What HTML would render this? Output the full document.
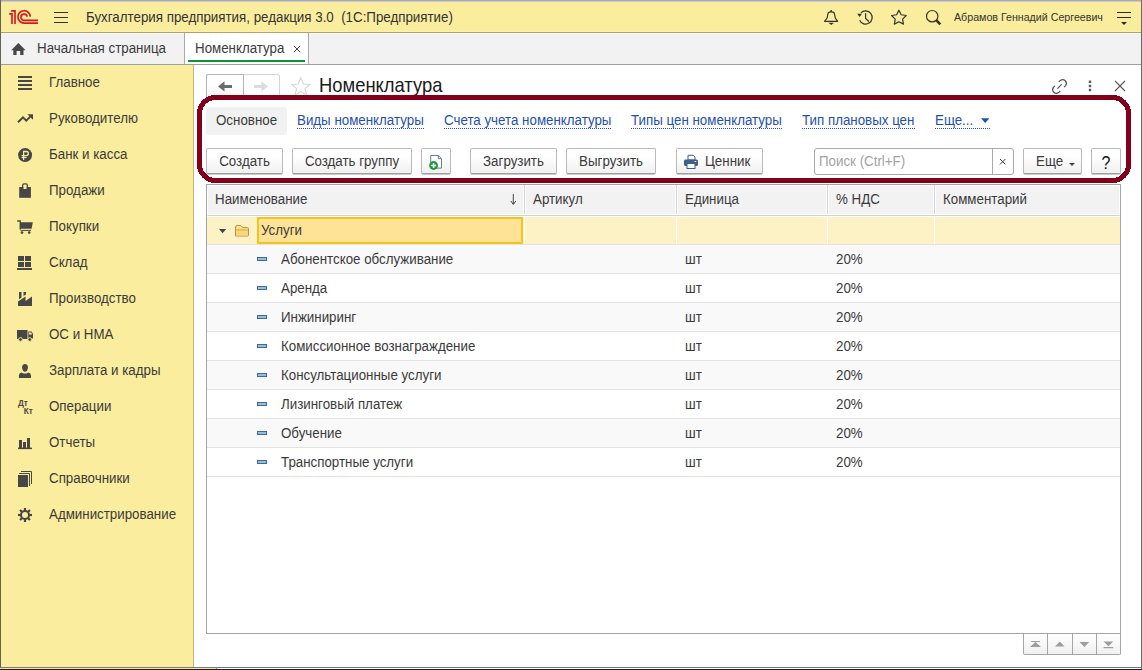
<!DOCTYPE html>
<html><head><meta charset="utf-8">
<style>
*{box-sizing:border-box}
html,body{margin:0;padding:0}
body{width:1142px;height:670px;overflow:hidden;position:relative;background:#fff;font-family:"Liberation Sans",sans-serif;font-size:13.33px;color:#3a3a3a}
.a{position:absolute}
.t{position:absolute;white-space:nowrap;line-height:15px;transform:scaleY(1.1);transform-origin:0 3px}
svg{position:absolute;overflow:visible}
/* header */
#hdr{left:0;top:0;width:1142px;height:33px;background:#fbed9e;border-top:1px solid #acacac;border-bottom:1px solid #aba273;box-shadow:inset 0 -1px 0 #fff2a8}
#tabs{left:0;top:33px;width:1142px;height:32px;background:#f2f2f2;border-bottom:1px solid #a0a0a0;box-shadow:inset 0 1px 0 #f8f8fa}
#side{left:0;top:65px;width:194px;height:602px;background:#fbed9e;border-right:1px solid #c6b578}
.btn{position:absolute;height:26px;top:148px;border:1px solid #b9b9b9;border-bottom-color:#a0a0a0;border-radius:2px;background:linear-gradient(#ffffff 30%,#f0f0f0);box-shadow:0 1px 0 #c9c9c9}
.lnk{color:#1f4fae}
.ul{position:absolute;top:128px;height:1px;border-top:1px dotted #1f4fae}
</style></head><body>

<!-- header -->
<div class="a" id="hdr"></div>
<div class="a" style="left:0;top:1px;width:1142px;height:1px;background:#c9cacf"></div>
<div class="a" id="tabs"></div>
<div class="a" id="side"></div>

<!-- outer borders -->
<div class="a" style="left:0;top:0;width:1px;height:670px;background:#65624d"></div>
<div class="a" style="left:1141px;top:0;width:1px;height:670px;background:#6a6a6a"></div>
<div class="a" style="left:0;top:667px;width:1142px;height:1px;background:#777"></div>
<div class="a" style="left:0;top:668px;width:216px;height:1px;background:#fbe998"></div>
<div class="a" style="left:216px;top:668px;width:1px;height:1px;background:#b0a060"></div>
<div class="a" style="left:0;top:669px;width:1142px;height:1px;background:#1d1d22"></div>

<!-- header content -->
<svg style="left:0;top:0" width="60" height="33" viewBox="0 0 60 33">
  <g fill="none" stroke="#d9161e" stroke-width="1.65">
    <path d="M9.2 13.9 H12 V24 M11.1 10.8 H15 V24"/>
    <path d="M30.3 16.6 A6.2 6.2 0 1 0 24.2 23.1 H38"/>
    <path d="M27.1 16.6 A3.1 3.1 0 1 0 24.2 20.3 H38"/>
  </g>
  <g stroke="#333" stroke-width="1.2">
    <path d="M54 12.5 H68 M54 17.5 H68 M54 22.5 H68"/>
  </g>
</svg>
<div class="t" style="left:86px;top:9px;color:#333">Бухгалтерия предприятия, редакция 3.0&nbsp; (1С:Предприятие)</div>

<div class="t" style="left:954px;top:9px;font-size:10.67px;color:#333">Абрамов Геннадий Сергеевич</div>

<!-- tabs -->
<div class="a" style="left:184px;top:33px;width:1px;height:31px;background:#a9a9a9"></div>
<div class="a" style="left:185px;top:33px;width:123px;height:31px;background:#fff"></div>
<div class="a" style="left:308px;top:33px;width:1px;height:31px;background:#a9a9a9"></div>
<div class="a" style="left:188px;top:60px;width:117px;height:2px;background:#0e9436"></div>
<svg style="left:0;top:0" width="1142" height="670" viewBox="0 0 1142 670">
 <path d="M18.4 43 L25.6 50.2 H23.5 V55 H20.2 V51 H16.6 V55 H13.3 V50.2 H11.2 Z" fill="#474747"/>
 <path d="M293.8 45.8 L300.2 52.2 M300.2 45.8 L293.8 52.2" stroke="#444" stroke-width="1"/>
</svg>
<div class="t" style="left:37px;top:40px">Начальная страница</div>
<div class="t" style="left:195px;top:40px">Номенклатура</div>


<!-- sidebar icons + header icons -->
<svg style="left:0;top:0" width="1142" height="670" viewBox="0 0 1142 670">
 <g fill="#474747">
  <rect x="18" y="76" width="14" height="2"/><rect x="18" y="80" width="14" height="2"/><rect x="18" y="84" width="14" height="2"/><rect x="18" y="88" width="14" height="2"/>
 </g>
 <g fill="none" stroke="#474747" stroke-width="2">
  <path d="M18 122.3 L23 117.3 L26.3 120.6 L31 115.9"/>
 </g>
 <path d="M27.4 114.2 H33 V119.8 Z" fill="#474747"/>
 <circle cx="25.1" cy="155.1" r="7" fill="#474747"/>
 <g fill="none" stroke="#fbed9e" stroke-width="1.3">
  <path d="M23.6 160 V151.5 H26.4 Q28.3 151.5 28.3 153.55 Q28.3 155.55 26.4 155.55 H21.6"/>
  <path d="M21.6 157.55 H26.6" stroke-width="1.1"/>
 </g>
 <rect x="19.2" y="187" width="11.7" height="10.8" fill="#474747"/>
 <rect x="23.3" y="187" width="3.4" height="2" fill="#fbed9e"/>
 <path d="M22.65 189 V185.2 Q22.65 183.8 24.1 183.8 H25.9 Q27.35 183.8 27.35 185.2 V189" fill="none" stroke="#474747" stroke-width="1.3"/>
 <path d="M17.2 221 H20.2 V229.5" fill="none" stroke="#474747" stroke-width="1.3"/>
 <path d="M20 222.3 H32.8 L31.6 228.7 H20 Z" fill="#474747"/>
 <path d="M20.5 230.4 H31" stroke="#474747" stroke-width="1"/>
 <circle cx="22" cy="232.6" r="1.35" fill="#474747"/><circle cx="29.2" cy="232.6" r="1.35" fill="#474747"/>
 <g fill="#474747">
  <rect x="18" y="256" width="6" height="5"/><rect x="25" y="256" width="6" height="5"/><rect x="18" y="262" width="6" height="5"/><rect x="25" y="262" width="6" height="5"/>
  <rect x="17" y="268" width="15" height="2"/>
  <path d="M18 306 V301.5 L25.5 296.5 V301 L32 296.5 V306 Z"/>
  <path d="M19 292 H21.5 V297.6 L19 299.2 Z"/><path d="M23.5 292 H26 V294.4 L23.5 296.1 Z"/>
  <rect x="17" y="330" width="10.5" height="9"/>
  <path d="M28.3 331.6 H31.6 L33 334 V338.4 H28.3 Z"/>
 </g>
 <path d="M29 332.4 H31.2 L32.2 334.4 H29 Z" fill="#fbed9e"/>
 <circle cx="20.5" cy="339.5" r="1.9" fill="#474747" stroke="#fbed9e" stroke-width="0.9"/>
 <circle cx="29.8" cy="339.5" r="1.9" fill="#474747" stroke="#fbed9e" stroke-width="0.9"/>
 <g fill="#474747">
  <path d="M25 363.9 C26.9 363.9 27.9 365.2 27.9 367.2 C27.9 369.6 26.6 371.7 25 371.7 C23.4 371.7 22.1 369.6 22.1 367.2 C22.1 365.2 23.1 363.9 25 363.9 Z"/>
  <path d="M18.9 378 V375.6 Q18.9 373.2 21.6 372.5 L23.4 373.4 H26.6 L28.4 372.5 Q31 373.2 31 375.6 V378 Z"/>
 </g>
 <text x="18" y="405.6" font-family="Liberation Sans" font-size="8.2" font-weight="bold" fill="#474747">Дт</text>
 <text x="23.8" y="414" font-family="Liberation Sans" font-size="8.2" font-weight="bold" fill="#474747">Кт</text>
 <g fill="#474747">
  <rect x="19" y="440" width="3" height="8"/><rect x="23" y="442" width="3" height="6"/><rect x="27" y="438" width="3" height="10"/>
  <rect x="18" y="447.6" width="14" height="1.5"/>
  <rect x="18" y="475" width="10" height="12"/>
 </g>
 <path d="M19 473.5 H29.5 V486 M21 471.5 H31.5 V484" fill="none" stroke="#474747" stroke-width="1"/>
 <g transform="translate(25 515)">
  <g fill="#474747">
   <rect x="-1.1" y="-7" width="2.2" height="14"/>
   <rect x="-1.1" y="-7" width="2.2" height="14" transform="rotate(45)"/>
   <rect x="-1.1" y="-7" width="2.2" height="14" transform="rotate(90)"/>
   <rect x="-1.1" y="-7" width="2.2" height="14" transform="rotate(135)"/>
  </g>
  <circle r="4" fill="none" stroke="#474747" stroke-width="2"/>
  <circle r="3" fill="#fbed9e"/>
 </g>

 <!-- header icons -->
 <g fill="none" stroke="#333" stroke-width="1.2">
  <path d="M824.6 21.4 H837.6 C837.6 20.6 835.8 19.6 835.2 17.6 C834.8 16 834.6 13.6 834 12.6 C833.6 12 833 11.8 831.2 11.8 C829.4 11.8 828.8 12 828.4 12.6 C827.8 13.6 827.6 16 827.2 17.6 C826.6 19.6 824.6 20.6 824.6 21.4 Z"/>
  <path d="M860.9 12.8 A6.6 6.6 0 1 1 859.6 20.3"/>
  <path d="M865.6 13.3 V18.4 L869 21.5"/>
  <path d="M898.90 10.20 L901.19 14.74 L906.22 15.52 L902.61 19.11 L903.43 24.13 L898.90 21.80 L894.37 24.13 L895.19 19.11 L891.58 15.52 L896.61 14.74 Z" stroke-linejoin="round"/>
  <circle cx="932.2" cy="16.2" r="5.7"/>
 </g>
 <path d="M828.5 22.8 H833.9 L831.2 24.9 Z" fill="#333"/><circle cx="831.2" cy="10.9" r="0.9" fill="#333"/>
 <path d="M857.2 13.8 H862 L859.6 16.9 Z" fill="#333"/>
 <path d="M936.2 20.2 L940.3 24.3" stroke="#333" stroke-width="2.6"/>
 <g stroke="#2b2b2b" stroke-width="1.1"><path d="M1117 12.5 H1131 M1117 17.5 H1131"/></g>
 <path d="M1121 22 H1127 L1124 25 Z" fill="#2b2b2b"/>
</svg>

<!-- form header -->
<div class="a" style="left:206px;top:74px;width:38px;height:26px;border:1px solid #b3b3b3;border-right:none;border-radius:2px 0 0 2px;background:linear-gradient(#fff 40%,#f3f3f3)"></div>
<div class="a" style="left:243px;top:74px;width:37px;height:26px;border:1px solid #d4d4d4;border-radius:0 2px 2px 0;background:#fff"></div>
<div class="a" style="left:243px;top:74px;width:1px;height:26px;background:#b3b3b3"></div>
<svg style="left:0;top:0" width="1142" height="670" viewBox="0 0 1142 670">
 <path d="M218 86.4 L224.5 81.2 V84.9 H232 V88 H224.5 V91.6 Z" fill="#6b6b6b"/>
 <path d="M268 86.4 L261.5 81.2 V84.9 H254 V88 H261.5 V91.6 Z" fill="#dcdcdc"/>
 <path d="M300.8 77.8 L303.4 84 L310 84.4 L305 88.6 L306.6 95 L300.8 91.5 L295 95 L296.6 88.6 L291.6 84.4 L298.2 84 Z" fill="none" stroke="#d5d5d5" stroke-width="1.1"/>
 <g fill="none" stroke="#555" stroke-width="1.1" transform="translate(1059.5 86.5) scale(1.13) translate(-1059.5 -86.5)">
  <path d="M1058.9 82.5 L1060.3 81.1 A3.3 3.3 0 0 1 1064.9 85.7 L1063.5 87.1"/>
  <path d="M1060.1 90.5 L1058.7 91.9 A3.3 3.3 0 0 1 1054.1 87.3 L1055.5 85.9"/>
  <path d="M1057.6 88.4 L1061.4 84.6"/>
 </g>
 <g fill="#555"><rect x="1088.8" y="80.6" width="2.4" height="2.4"/><rect x="1088.8" y="84.8" width="2.4" height="2.4"/><rect x="1088.8" y="88.8" width="2.4" height="2.4"/></g>
 <path d="M1115 81 L1125 91 M1125 81 L1115 91" stroke="#555" stroke-width="1.1"/>
</svg>
<div class="t" style="left:319px;top:74px;font-size:18.4px;line-height:21px;color:#1a1a1a">Номенклатура</div>

<!-- tabs row -->
<div class="a" style="left:206px;top:107px;width:81px;height:28px;background:#f1f1f1;border-radius:3px"></div>
<div class="t" style="left:216px;top:112px">Основное</div>
<div class="t lnk" style="left:297px;top:112px">Виды номенклатуры</div>
<div class="t lnk" style="left:444px;top:112px">Счета учета номенклатуры</div>
<div class="t lnk" style="left:631px;top:112px">Типы цен номенклатуры</div>
<div class="t lnk" style="left:802px;top:112px">Тип плановых цен</div>
<div class="t lnk" style="left:935px;top:112px">Еще...</div>
<div class="ul" style="left:297px;width:127px"></div>
<div class="ul" style="left:444px;width:167px"></div>
<div class="ul" style="left:631px;width:151px"></div>
<div class="ul" style="left:802px;width:113px"></div>
<div class="ul" style="left:935px;width:55px"></div>
<svg style="left:0;top:0" width="1142" height="670" viewBox="0 0 1142 670"><path d="M981 118.3 H989.4 L985.2 122.9 Z" fill="#1f4fae"/></svg>

<!-- buttons row -->
<div class="btn" style="left:206px;width:77px"></div>
<div class="t" style="left:206px;top:153px;width:77px;text-align:center">Создать</div>
<div class="btn" style="left:292px;width:120px"></div>
<div class="t" style="left:292px;top:153px;width:120px;text-align:center">Создать группу</div>
<div class="btn" style="left:421px;width:30px"></div>
<svg style="left:0;top:0" width="1142" height="670" viewBox="0 0 1142 670">
 <path d="M430.7 155.5 H438.3 L441.5 158.7 V168.1 H430.7 Z" fill="#fff" stroke="#667a95" stroke-width="1"/>
 <path d="M438.3 155.5 V158.7 H441.5" fill="none" stroke="#667a95" stroke-width="1"/>
 <circle cx="433.6" cy="165.5" r="4.4" fill="#1b9b35"/>
 <path d="M433.6 163 V168 M431.1 165.5 H436.1" stroke="#fff" stroke-width="1.5"/>
</svg>
<div class="btn" style="left:470px;width:87px"></div>
<div class="t" style="left:470px;top:153px;width:87px;text-align:center">Загрузить</div>
<div class="btn" style="left:566px;width:90px"></div>
<div class="t" style="left:566px;top:153px;width:90px;text-align:center">Выгрузить</div>
<div class="btn" style="left:676px;width:87px"></div>
<svg style="left:0;top:0" width="1142" height="670" viewBox="0 0 1142 670">
 <path d="M688 155.3 H693.2 L695 157 V160 H688 Z" fill="#fff" stroke="#3f6088" stroke-width="1"/>
 <rect x="684" y="159.5" width="14" height="6.5" rx="1.5" fill="#3f6088"/>
 <rect x="687" y="163.5" width="8" height="5" fill="#fff" stroke="#3f6088" stroke-width="1"/>
 <rect x="694.6" y="161" width="1.6" height="1" fill="#fff"/>
</svg>
<div class="t" style="left:705px;top:153px">Ценник</div>

<div class="a" style="left:814px;top:148px;width:200px;height:27px;border:1px solid #a9a9a9;border-radius:3px;background:#fff"></div>
<div class="a" style="left:992px;top:149px;width:1px;height:25px;background:#a9a9a9"></div>
<div class="t" style="left:819px;top:153px;color:#a3a3a3">Поиск (Ctrl+F)</div>
<svg style="left:0;top:0" width="1142" height="670" viewBox="0 0 1142 670"><path d="M1000 159 L1005.4 164.4 M1005.4 159 L1000 164.4" stroke="#3a3a3a" stroke-width="1"/></svg>

<div class="btn" style="left:1023px;width:59px"></div>
<div class="t" style="left:1036px;top:153px">Еще</div>
<svg style="left:0;top:0" width="1142" height="670" viewBox="0 0 1142 670"><path d="M1069 163 H1075 L1072 166 Z" fill="#444"/></svg>
<div class="btn" style="left:1091px;width:30px"></div>
<div class="t" style="left:1091px;top:154px;width:30px;text-align:center;font-size:16px;line-height:18px;color:#111">?</div>

<!-- table -->
<div class="a" style="left:206px;top:184px;width:915px;height:450px;border:1px solid #a5a5a5;background:#fff"></div>
<div class="a" style="left:207px;top:185px;width:913px;height:31px;background:#f2f2f2;border:1px solid #fff;border-bottom-color:#d2d2d2"></div>
<div class="a" style="left:524px;top:185px;width:1px;height:30px;background:#d3d3d3"></div><div class="a" style="left:525px;top:185px;width:1px;height:30px;background:#fff"></div>
<div class="a" style="left:676px;top:185px;width:1px;height:30px;background:#d3d3d3"></div><div class="a" style="left:677px;top:185px;width:1px;height:30px;background:#fff"></div>
<div class="a" style="left:827px;top:185px;width:1px;height:30px;background:#d3d3d3"></div><div class="a" style="left:828px;top:185px;width:1px;height:30px;background:#fff"></div>
<div class="a" style="left:934px;top:185px;width:1px;height:30px;background:#d3d3d3"></div><div class="a" style="left:935px;top:185px;width:1px;height:30px;background:#fff"></div>
<div class="a" style="left:523px;top:185px;width:1px;height:30px;background:#fff"></div><div class="a" style="left:675px;top:185px;width:1px;height:30px;background:#fff"></div><div class="a" style="left:826px;top:185px;width:1px;height:30px;background:#fff"></div><div class="a" style="left:933px;top:185px;width:1px;height:30px;background:#fff"></div><div class="a" style="left:207px;top:214px;width:913px;height:1px;background:#fff"></div>
<div class="t" style="left:215px;top:191px">Наименование</div>
<div class="t" style="left:533px;top:191px">Артикул</div>
<div class="t" style="left:685px;top:191px">Единица</div>
<div class="t" style="left:836px;top:191px">% НДС</div>
<div class="t" style="left:943px;top:191px">Комментарий</div>
<svg style="left:0;top:0" width="1142" height="670" viewBox="0 0 1142 670"><path d="M513.3 194 V204 M510.8 201 L513.3 204.5 L515.8 201" fill="none" stroke="#444" stroke-width="1"/></svg>

<!-- group row -->
<div class="a" style="left:207px;top:217px;width:913px;height:27px;background:#fdf1c6"></div>
<div class="a" style="left:524px;top:217px;width:1px;height:27px;background:#fff"></div>
<div class="a" style="left:676px;top:217px;width:1px;height:27px;background:#fff"></div>
<div class="a" style="left:827px;top:217px;width:1px;height:27px;background:#fff"></div>
<div class="a" style="left:934px;top:217px;width:1px;height:27px;background:#fff"></div>
<div class="a" style="left:207px;top:244px;width:913px;height:1px;background:#e3e3e3"></div>
<div class="a" style="left:257px;top:217px;width:266px;height:27px;border:2px solid #f6c21c;background:#fee396"></div>
<svg style="left:0;top:0" width="1142" height="670" viewBox="0 0 1142 670">
 <path d="M219 229 H226.2 L222.6 233.2 Z" fill="#444"/>
 <path d="M235.5 236 V227 Q235.5 225.5 237 225.5 H240.8 L242.6 227.5 H247.4 Q248.5 227.5 248.5 228.6 V235 Q248.5 236 247.5 236 Z" fill="#fbe08a" stroke="#c4903c" stroke-width="1"/>
 <path d="M236 230 H248" stroke="#c4903c" stroke-width="1"/>
 <rect x="236" y="230.5" width="12" height="5" fill="#f7d67a"/>
 </svg>
<div class="t" style="left:261px;top:222px">Услуги</div>
<div class="a" style="left:207px;top:245px;width:913px;height:28px;background:#f9f9f9"></div>
<div class="a" style="left:207px;top:273px;width:913px;height:1px;background:#e3e3e3"></div>
<div class="a" style="left:257px;top:257px;width:10px;height:4px;background:#8fbfe6;border:1px solid #426a8e"></div>
<div class="t" style="left:281px;top:251px">Абонентское обслуживание</div>
<div class="t" style="left:685px;top:251px">шт</div>
<div class="t" style="left:836px;top:251px">20%</div>
<div class="a" style="left:207px;top:274px;width:913px;height:28px;background:#fff"></div>
<div class="a" style="left:207px;top:302px;width:913px;height:1px;background:#e3e3e3"></div>
<div class="a" style="left:257px;top:286px;width:10px;height:4px;background:#8fbfe6;border:1px solid #426a8e"></div>
<div class="t" style="left:281px;top:280px">Аренда</div>
<div class="t" style="left:685px;top:280px">шт</div>
<div class="t" style="left:836px;top:280px">20%</div>
<div class="a" style="left:207px;top:303px;width:913px;height:28px;background:#f9f9f9"></div>
<div class="a" style="left:207px;top:331px;width:913px;height:1px;background:#e3e3e3"></div>
<div class="a" style="left:257px;top:315px;width:10px;height:4px;background:#8fbfe6;border:1px solid #426a8e"></div>
<div class="t" style="left:281px;top:309px">Инжиниринг</div>
<div class="t" style="left:685px;top:309px">шт</div>
<div class="t" style="left:836px;top:309px">20%</div>
<div class="a" style="left:207px;top:332px;width:913px;height:28px;background:#fff"></div>
<div class="a" style="left:207px;top:360px;width:913px;height:1px;background:#e3e3e3"></div>
<div class="a" style="left:257px;top:344px;width:10px;height:4px;background:#8fbfe6;border:1px solid #426a8e"></div>
<div class="t" style="left:281px;top:338px">Комиссионное вознаграждение</div>
<div class="t" style="left:685px;top:338px">шт</div>
<div class="t" style="left:836px;top:338px">20%</div>
<div class="a" style="left:207px;top:361px;width:913px;height:28px;background:#f9f9f9"></div>
<div class="a" style="left:207px;top:389px;width:913px;height:1px;background:#e3e3e3"></div>
<div class="a" style="left:257px;top:373px;width:10px;height:4px;background:#8fbfe6;border:1px solid #426a8e"></div>
<div class="t" style="left:281px;top:367px">Консультационные услуги</div>
<div class="t" style="left:685px;top:367px">шт</div>
<div class="t" style="left:836px;top:367px">20%</div>
<div class="a" style="left:207px;top:390px;width:913px;height:28px;background:#fff"></div>
<div class="a" style="left:207px;top:418px;width:913px;height:1px;background:#e3e3e3"></div>
<div class="a" style="left:257px;top:402px;width:10px;height:4px;background:#8fbfe6;border:1px solid #426a8e"></div>
<div class="t" style="left:281px;top:396px">Лизинговый платеж</div>
<div class="t" style="left:685px;top:396px">шт</div>
<div class="t" style="left:836px;top:396px">20%</div>
<div class="a" style="left:207px;top:419px;width:913px;height:28px;background:#f9f9f9"></div>
<div class="a" style="left:207px;top:447px;width:913px;height:1px;background:#e3e3e3"></div>
<div class="a" style="left:257px;top:431px;width:10px;height:4px;background:#8fbfe6;border:1px solid #426a8e"></div>
<div class="t" style="left:281px;top:425px">Обучение</div>
<div class="t" style="left:685px;top:425px">шт</div>
<div class="t" style="left:836px;top:425px">20%</div>
<div class="a" style="left:207px;top:448px;width:913px;height:28px;background:#fff"></div>
<div class="a" style="left:207px;top:476px;width:913px;height:1px;background:#e3e3e3"></div>
<div class="a" style="left:257px;top:460px;width:10px;height:4px;background:#8fbfe6;border:1px solid #426a8e"></div>
<div class="t" style="left:281px;top:454px">Транспортные услуги</div>
<div class="t" style="left:685px;top:454px">шт</div>
<div class="t" style="left:836px;top:454px">20%</div>

<!-- scroll buttons -->
<div class="a" style="left:1023px;top:634px;width:98px;height:21px;border:1px solid #a5a5a5;border-top:none;border-radius:0 0 2px 2px;background:linear-gradient(#fff,#f0f0f0)"></div>
<div class="a" style="left:1047px;top:634px;width:1px;height:20px;background:#a5a5a5"></div>
<div class="a" style="left:1072px;top:634px;width:1px;height:20px;background:#a5a5a5"></div>
<div class="a" style="left:1096px;top:634px;width:1px;height:20px;background:#a5a5a5"></div>
<svg style="left:0;top:0" width="1142" height="670" viewBox="0 0 1142 670">
 <g fill="#9d9d9d">
  <rect x="1031" y="641" width="9" height="1"/><path d="M1035.5 642 L1041 647 H1030 Z"/>
  <path d="M1059.8 641.6 L1064.6 646.6 H1055 Z"/>
  <path d="M1084.4 647 L1079.6 642 H1089.2 Z"/>
  <path d="M1108.4 646.2 L1103.6 641.4 H1113.2 Z"/><rect x="1103.6" y="647" width="9.6" height="1.2"/>
 </g>
</svg>

<!-- red annotation -->
<svg style="left:0;top:0" width="1142" height="670" viewBox="0 0 1142 670"><rect x="199.5" y="97.5" width="929" height="83" rx="16" ry="16" fill="none" stroke="#82001a" stroke-width="5" shape-rendering="crispEdges"/></svg>

<!-- sidebar -->
<div class="t" style="left:49px;top:74px">Главное</div>
<div class="t" style="left:49px;top:110px">Руководителю</div>
<div class="t" style="left:49px;top:146px">Банк и касса</div>
<div class="t" style="left:49px;top:182px">Продажи</div>
<div class="t" style="left:49px;top:218px">Покупки</div>
<div class="t" style="left:49px;top:254px">Склад</div>
<div class="t" style="left:49px;top:290px">Производство</div>
<div class="t" style="left:49px;top:326px">ОС и НМА</div>
<div class="t" style="left:49px;top:362px">Зарплата и кадры</div>
<div class="t" style="left:49px;top:398px">Операции</div>
<div class="t" style="left:49px;top:434px">Отчеты</div>
<div class="t" style="left:49px;top:470px">Справочники</div>
<div class="t" style="left:49px;top:506px">Администрирование</div>
</body></html>
